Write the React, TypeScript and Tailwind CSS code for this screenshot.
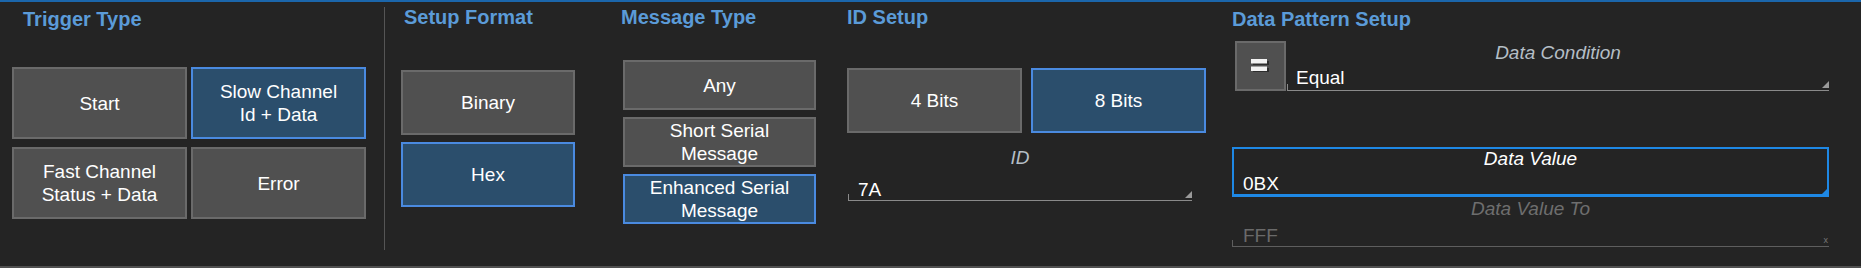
const font = "font-['Liberation_Sans',Arial,sans-serif]"

function Header({ text, className }: { text: string; className?: string }) {
  return (
    <h2 className={`text-[20px] leading-[24px] font-bold text-[#5b9bd8] whitespace-nowrap ${className ?? ""}`}>
      {text}
    </h2>
  )
}

function Btn({ lines, active, className }: { lines: string[]; active?: boolean; className?: string }) {
  return (
    <div
      className={`flex flex-col items-center justify-center text-center border-2 text-[19px] leading-[23px] text-white ${
        active ? "bg-[#2b4e6c] border-[#4a8ae0]" : "bg-[#505050] border-[#6a6a6a]"
      } ${className ?? ""}`}
    >
      {lines.map((l) => (
        <span key={l}>{l}</span>
      ))}
    </div>
  )
}

function Corner({ color }: { color: string }) {
  return (
    <svg className="absolute right-0 bottom-[2px]" width="7" height="7" viewBox="0 0 7 7">
      <polygon points="7,0 7,7 0,7" fill={color} />
    </svg>
  )
}

export default function App() {
  return (
    <div
      className={`${font} w-[1861px] h-[268px] box-border bg-[#242424] border-t-2 border-t-[#1b66ab] border-b-2 border-b-[#505050] flex items-start overflow-hidden`}
    >
      {/* Trigger Type */}
      <div className="w-[384px] shrink-0 flex flex-col">
        <Header text="Trigger Type" className="mt-[5px] ml-[23px]" />
        <div className="mt-[36px] ml-[12px] grid grid-cols-[175px_175px] grid-rows-[72px_72px] gap-x-[4px] gap-y-[8px]">
          <Btn lines={["Start"]} />
          <Btn lines={["Slow Channel", "Id + Data"]} active />
          <Btn lines={["Fast Channel", "Status + Data"]} />
          <Btn lines={["Error"]} />
        </div>
      </div>

      <div className="w-px h-[243px] mt-[5px] bg-[#555555] shrink-0" />

      {/* Setup Format */}
      <div className="w-[236px] shrink-0 flex flex-col">
        <Header text="Setup Format" className="mt-[3px] ml-[19px]" />
        <div className="mt-[41px] ml-[16px] flex flex-col gap-[7px]">
          <Btn lines={["Binary"]} className="w-[174px] h-[65px]" />
          <Btn lines={["Hex"]} active className="w-[174px] h-[65px]" />
        </div>
      </div>

      {/* Message Type */}
      <div className="w-[226px] shrink-0 flex flex-col">
        <Header text="Message Type" className="mt-[3px]" />
        <div className="mt-[31px] ml-[2px] flex flex-col gap-[7px]">
          <Btn lines={["Any"]} className="w-[193px] h-[50px]" />
          <Btn lines={["Short Serial", "Message"]} className="w-[193px] h-[50px]" />
          <Btn lines={["Enhanced Serial", "Message"]} active className="w-[193px] h-[50px]" />
        </div>
      </div>

      {/* ID Setup */}
      <div className="w-[385px] shrink-0 flex flex-col">
        <Header text="ID Setup" className="mt-[3px]" />
        <div className="mt-[39px] flex gap-[9px]">
          <Btn lines={["4 Bits"]} className="w-[175px] h-[65px]" />
          <Btn lines={["8 Bits"]} active className="w-[175px] h-[65px]" />
        </div>
        <div className="mt-[13px] ml-[1px] w-[344px] text-center italic text-[19px] leading-[24px] text-[#b4bec6]">ID</div>
        <div className="relative mt-[8px] ml-[1px] w-[344px] h-[23px] border-b border-[#8a8a8a]">
          <div className="absolute left-0 bottom-0 w-px h-[6px] bg-[#8a8a8a]" />
          <span className="block pl-[10px] text-[19px] leading-[24px] text-white">7A</span>
          <Corner color="#9a9a9a" />
        </div>
      </div>

      {/* Data Pattern Setup */}
      <div className="flex-1 flex flex-col">
        <Header text="Data Pattern Setup" className="mt-[5px]" />
        <div className="mt-[10px] flex items-start">
          <div className="ml-[3px] w-[51px] h-[50px] bg-[#505050] border-2 border-[#6a6a6a] flex items-center justify-center">
            <svg width="20" height="16" viewBox="0 0 20 16">
              <rect x="2" y="3" width="16" height="4" fill="#111" opacity="0.55" />
              <rect x="2" y="10" width="16" height="4" fill="#111" opacity="0.55" />
              <rect x="0" y="1" width="16" height="4.5" fill="#f2f2f2" />
              <rect x="0" y="8.5" width="16" height="4.5" fill="#f2f2f2" />
            </svg>
          </div>
          <div className="ml-[1px] w-[542px] flex flex-col">
            <div className="h-[24px] text-center italic text-[19px] leading-[24px] text-[#b4bec6]">Data Condition</div>
            <div className="relative h-[26px] border-b border-[#8a8a8a]">
              <div className="absolute left-0 bottom-0 w-px h-[6px] bg-[#8a8a8a]" />
              <span className="block pt-[1px] pl-[9px] text-[19px] leading-[24px] text-white">Equal</span>
              <Corner color="#9a9a9a" />
            </div>
          </div>
        </div>

        <div className="relative mt-[56px] w-[597px] h-[50px] box-border border-2 border-b-[3px] border-[#1e88e5] flex flex-col">
          <div className="text-center italic text-[19px] leading-[20px] text-white">Data Value</div>
          <div className="mt-[5px] pl-[9px] text-[19px] leading-[20px] text-white">0BX</div>
          <svg className="absolute right-0 bottom-0" width="5" height="5" viewBox="0 0 5 5">
            <polygon points="5,0 5,5 0,5" fill="#1e88e5" />
          </svg>
        </div>

        <div className="mt-[2px] w-[597px] text-center italic text-[19px] leading-[20px] text-[#6e6e6e]">Data Value To</div>
        <div className="relative mt-[7px] w-[597px] h-[21px] border-b border-[#5e5e5e]">
          <div className="absolute left-0 bottom-0 w-px h-[6px] bg-[#5e5e5e]" />
          <span className="block pl-[11px] text-[19px] leading-[20px] text-[#6a6a6a]">FFF</span>
          <span className="absolute right-[1px] bottom-[1px] text-[9px] leading-[9px] text-[#777777]">x</span>
        </div>
      </div>
    </div>
  )
}
